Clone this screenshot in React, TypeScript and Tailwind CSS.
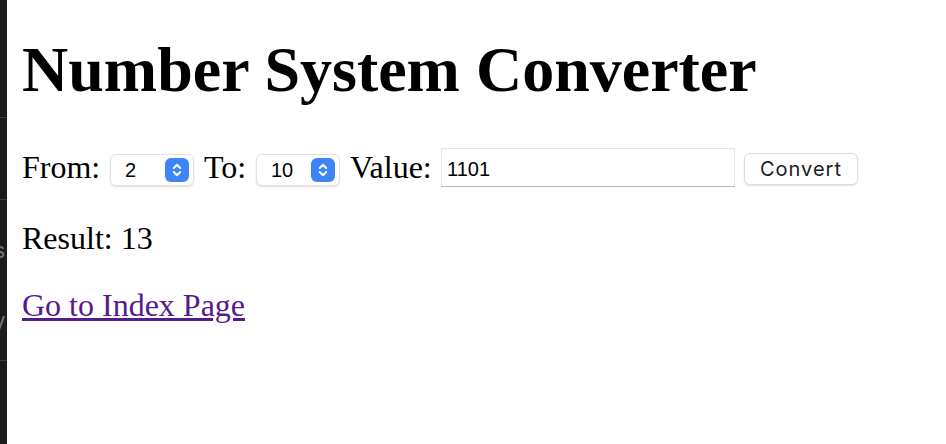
import { useState } from 'react'

function Chevrons() {
  return (
    <span className="absolute right-[4px] top-1/2 -translate-y-1/2 w-[24px] h-[24px] rounded-[6px] bg-[#3d84f7] flex items-center justify-center pointer-events-none">
      <svg width="10" height="16" viewBox="0 0 10 16" fill="none">
        <path d="M1.8 6 L5 2.8 L8.2 6" stroke="white" strokeWidth="2" strokeLinecap="round" strokeLinejoin="round" />
        <path d="M1.8 10 L5 13.2 L8.2 10" stroke="white" strokeWidth="2" strokeLinecap="round" strokeLinejoin="round" />
      </svg>
    </span>
  )
}

function BaseSelect({ value, onChange }: { value: string; onChange: (v: string) => void }) {
  return (
    <div className="relative w-[84px] h-[32px] mt-[5px] rounded-[6px] bg-white border border-[#e2e2e2] shadow-[0_1px_2px_rgba(0,0,0,0.12)]">
      <select
        value={value}
        onChange={(e) => onChange(e.target.value)}
        className="appearance-none block w-full h-full bg-transparent py-0 pl-[14px] pr-[30px] text-[20px] leading-normal text-black outline-none font-['Liberation_Sans',Arial,sans-serif]"
      >
        <option value="2">2</option>
        <option value="8">8</option>
        <option value="10">10</option>
        <option value="16">16</option>
      </select>
      <Chevrons />
    </div>
  )
}

export default function App() {
  const [from, setFrom] = useState('2')
  const [to, setTo] = useState('10')
  const [value, setValue] = useState('1101')
  const [result, setResult] = useState('13')

  function convert() {
    const n = parseInt(value, Number(from))
    setResult(isNaN(n) ? 'Invalid' : n.toString(Number(to)).toUpperCase())
  }

  return (
    <div className="flex w-[946px] h-[444px] bg-white overflow-hidden">
      {/* side strip of the neighbouring window */}
      <div className="relative w-[7px] h-full bg-[#1c1c1c] shrink-0 overflow-hidden font-['Liberation_Sans',sans-serif] text-[#7a7a7a] text-[22px] leading-none">
        <div className="absolute left-0 top-[117px] w-full h-px bg-[#3c3c3c]" />
        <div className="absolute left-0 top-[199px] w-full h-px bg-[#3c3c3c]" />
        <div className="absolute left-0 top-[360px] w-full h-px bg-[#3c3c3c]" />
        <span className="absolute left-[-6px] top-[240px]">s</span>
        <span className="absolute left-[-6px] top-[310px]">y</span>
      </div>

      <div className="pl-[15px] font-['Liberation_Serif','Times_New_Roman',serif] text-black">
        <h1 className="mt-[34px] text-[64px] leading-[72px] font-bold">Number System Converter</h1>

        <div className="mt-[41px] h-[40px] flex items-center text-[32px] leading-[36px]">
          <span className="w-[88px]">From:</span>
          <BaseSelect value={from} onChange={setFrom} />
          <span className="ml-[10px] w-[52px]">To:</span>
          <BaseSelect value={to} onChange={setTo} />
          <span className="ml-[10px] w-[91px]">Value:</span>
          <input
            value={value}
            onChange={(e) => setValue(e.target.value)}
            className="w-[294px] h-[39px] pl-[5px] pt-[4px] border border-[#e4e4e4] border-b-[#b5b5b5] bg-white text-[20px] leading-[24px] text-black outline-none font-['Liberation_Sans',Arial,sans-serif]"
          />
          <button
            onClick={convert}
            className="ml-[9px] mt-[3px] w-[114px] h-[32px] rounded-[6px] bg-white border border-[#dcdcdc] shadow-[0_1px_2px_rgba(0,0,0,0.12)] text-[20px] leading-[24px] tracking-[1px] text-[#1a1a1a] font-['Inter','Liberation_Sans',sans-serif]"
          >
            Convert
          </button>
        </div>

        <p className="mt-[33px] text-[32px] leading-[36px]">Result: {result}</p>

        <p className="mt-[31px] text-[32px] leading-[36px]">
          <a href="#" className="text-[#551a8b] underline">
            Go to Index Page
          </a>
        </p>
      </div>
    </div>
  )
}
